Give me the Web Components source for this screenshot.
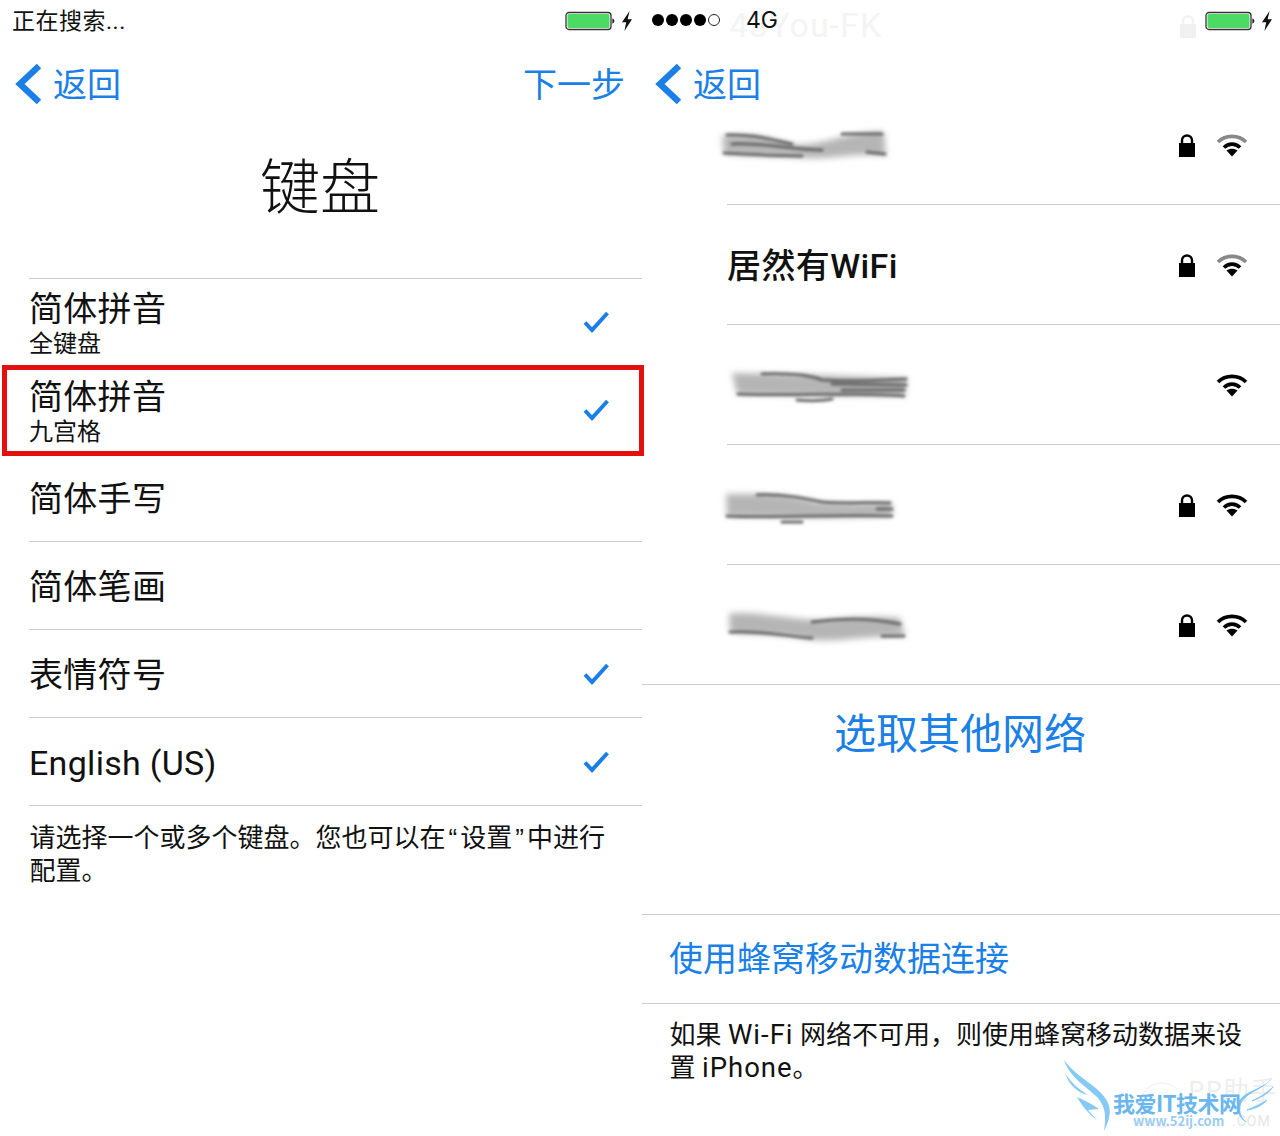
<!DOCTYPE html>
<html lang="zh-CN"><head><meta charset="utf-8"><style>
html,body{margin:0;background:#fff}
body{font-family:Roboto,"Noto Sans CJK SC",sans-serif;color:#111}
</style></head><body>
<x-page>
  <x-phone>
    <x-status mode="search"></x-status>
    <x-nav next="下一步"></x-nav>
    <x-title>键盘</x-title>
    <x-kb-list>
      <x-kb-row first sub="全键盘" check>简体拼音</x-kb-row>
      <x-kb-row sub="九宫格" check>简体拼音</x-kb-row>
      <x-kb-row>简体手写</x-kb-row>
      <x-kb-row>简体笔画</x-kb-row>
      <x-kb-row check>表情符号</x-kb-row>
      <x-kb-row check>English (US)</x-kb-row>
    </x-kb-list>
    <x-note pad="16">请选择一个或多个键盘。您也可以在<x-q>“</x-q>设置<x-q>”</x-q>中进行配置。</x-note>
    <x-redbox></x-redbox>
  </x-phone>
  <x-phone>
    <x-status mode="cell"></x-status>
    <x-nav></x-nav>
    <x-wifi-list>
      <x-wifi-row blur="1" dim></x-wifi-row>
      <x-wifi-row dim>居然有WiFi</x-wifi-row>
      <x-wifi-row blur="2" open></x-wifi-row>
      <x-wifi-row blur="3"></x-wifi-row>
      <x-wifi-row blur="4" full></x-wifi-row>
    </x-wifi-list>
    <x-other>选取其他网络</x-other>
    <x-cell-link>使用蜂窝移动数据连接</x-cell-link>
    <x-note pad="15">如果 <x-lat>Wi-Fi</x-lat> 网络不可用&#xFF0C;则使用蜂窝移动数据来设置 <x-lat>iPhone</x-lat>。</x-note>
    <x-watermark></x-watermark>
  </x-phone>
</x-page>
<script>
const BLUE='#1a7fe6';
const def=(name,html)=>{customElements.define(name,class extends HTMLElement{
  constructor(){super();this.attachShadow({mode:'open'}).innerHTML=typeof html==='function'?html(this):html;}
});};
const FONT='Roboto,"Noto Sans CJK SC",sans-serif';
const CJK='"Noto Sans CJK SC",sans-serif';
const battery=`<svg style="display:block" width="50" height="20" viewBox="0 0 50 20"><rect x="1" y="1.500" width="45" height="17" rx="3" fill="#fff" stroke="#333" stroke-width="1.300"/><rect x="2.500" y="3" width="42" height="14" rx="1.500" fill="#4cd964"/><path d="M47.400 7.500c1.300.3 2 1.300 2 2.500s-.7 2.200-2 2.500z" fill="#222"/></svg>`;
const bolt=`<svg style="display:block" width="12" height="20" viewBox="0 0 12 20"><path d="M8.600 0 1 11.200h4.200L3.400 20 11 8.200H6.600z" fill="#111"/></svg>`;
const lock=(c='#000')=>`<svg style="display:block" width="18" height="24" viewBox="0 0 18 24"><path d="M4 11V7.500a5 5 0 0 1 10 0V11" fill="none" stroke="${c}" stroke-width="2.400"/><rect x="1" y="10" width="16" height="14" fill="${c}"/></svg>`;
const wifi=(outer='#000')=>`<svg style="display:block" width="32" height="24" viewBox="0 0 32 24"><path d="M2 9C9.500 1.500 22.500 1.500 30 9" fill="none" stroke="${outer}" stroke-width="3.600"/><path d="M8 14.500C12.500 10 19.500 10 24 14.500" fill="none" stroke="#000" stroke-width="3.600"/><path d="M10.500 17.500 16 23.500 21.500 17.500C18 15 14 15 10.500 17.500z" fill="#000"/></svg>`;
const check=`<svg style="display:block" width="28" height="24" viewBox="0 0 28 24"><path d="M3 12.500 10 20 25.500 3" fill="none" stroke="${BLUE}" stroke-width="4"/></svg>`;

def('x-page',`<style>:host{display:grid;grid-template-columns:640px 640px;width:1280px;height:1136px;overflow:hidden;background:#fff}</style><slot></slot>`);
def('x-phone',`<style>:host{display:flex;flex-direction:column;position:relative;height:1136px;min-width:0}</style><slot></slot>`);
def('x-q',`<style>:host{display:inline;font-family:"Liberation Sans",sans-serif;padding:0 3px}</style><slot></slot>`);
def('x-lat',`<style>:host{display:inline;font-size:27.500px;letter-spacing:1px;line-height:1}</style><slot></slot>`);

def('x-status',el=>{
  const search=el.getAttribute('mode')==='search';
  return `<style>
  :host{display:flex;align-items:center;height:40px;padding:0 7px 0 12px;font-family:${FONT};color:#111;position:relative}
  .t{font-size:23px;line-height:42px;letter-spacing:.5px;padding-top:4px}
  .dots{display:flex;gap:2px;margin-right:26px}
  .dots i{width:12px;height:12px;border-radius:50%;background:#000;box-sizing:border-box}
  .dots i.o{background:#fff;border:1.200px solid #222}
  .g{font-family:Inter,Roboto,sans-serif;font-size:23px;line-height:42px;position:relative}
  .sp{flex:1}
  .b{display:flex;gap:6px;align-items:center;position:relative;margin-top:2px}
  .ghost{position:absolute;left:89px;top:4px;font:34px/42px Roboto,sans-serif;color:#f4f4f4;letter-spacing:1px}
  .gl{position:absolute;left:539px;top:14px;opacity:.05}
  </style>${search?`<span class="t">正在搜索...</span>`:`<span class="ghost">43You-FK</span><span class="gl">${lock()}</span><span class="dots"><i></i><i></i><i></i><i></i><i class="o"></i></span><span class="g">4G</span>`}<span class="sp"></span><span class="b">${battery}${bolt}</span>`;
});

def('x-nav',el=>{
  const n=el.getAttribute('next');
  return `<style>
  :host{display:flex;align-items:center;height:84px;padding:0 15px 0 15px;font-family:${CJK};font-size:34px;color:${BLUE}}
  svg{display:block;margin:4px 11px 0 0}
  .sp{flex:1}
  </style><svg width="27" height="42" viewBox="0 0 27 42"><path d="M24 3 5 21 24 39" fill="none" stroke="${BLUE}" stroke-width="6.500"/></svg><span>返回</span><span class="sp"></span>${n?`<span>${n}</span>`:''}`;
});

def('x-title',`<style>:host{display:flex;align-items:center;justify-content:center;height:154px;box-sizing:border-box;font-family:${CJK};font-size:60px;font-weight:300;color:#111;padding-bottom:38px}</style><slot></slot>`);

def('x-kb-list',`<style>:host{display:block;margin:0 -2px 0 29px;border-top:1px solid #ccc}</style><slot></slot>`);
def('x-kb-row',el=>{
  const s=el.getAttribute('sub');const c=el.hasAttribute('check');
  return `<style>
  :host{display:flex;align-items:center;height:88px;box-sizing:border-box;border-bottom:1px solid #ccc;font-family:${FONT};color:#111}
  :host([first]){margin-top:-1px}
  :host(:not([sub])) .tx{padding-top:2px}
  :host([sub]) .tx{padding-top:5px}
  .tx{flex:1;min-width:0}
  .m{font-size:34px;line-height:40px;letter-spacing:.3px}
  .s{font-size:24px;line-height:30px}
  .c{margin-right:32px;display:block;height:24px}
  </style><div class="tx"><div class="m"><slot></slot></div>${s?`<div class="s">${s}</div>`:''}</div>${c?`<span class="c">${check}</span>`:''}`;
});

def('x-note',el=>{
  const p=el.getAttribute('pad')||'12';
  return `<style>:host{display:block;padding:${p}px 30px 0 29.500px;font-family:${FONT};font-size:26px;line-height:32.500px;color:#111}</style><slot></slot>`;
});

def('x-redbox',`<style>:host{position:absolute;left:2px;top:365px;width:642px;height:91px;box-sizing:border-box;border:5px solid #e60f0f;z-index:3;pointer-events:none}</style>`);

def('x-wifi-list',`<style>:host{display:block;margin-top:-39px;margin-left:2px}</style><slot></slot>`);
const blurs={
 1:{band:'M80 10C110 6 130 12 150 18C175 22 210 4 242 6L244 30C215 26 190 34 165 32C130 30 110 30 82 28Z',lines:['M82 27C110 28 130 30 160 30','M85 9C110 8 130 14 150 18','M200 8 240 8','M225 26 243 28','M90 18C120 16 150 24 180 24']},
 2:{band:'M90 7C130 8 170 8 265 12L263 29C220 30 150 30 95 28Z',lines:['M96 28C150 30 220 26 262 30','M120 8C150 7 170 10 180 14C210 16 240 14 264 13','M190 18 264 19','M200 24 262 24','M155 34C165 35 180 35 190 33']},
 3:{band:'M84 8C120 8 150 8 175 16C200 18 225 18 250 17L250 30C200 32 130 32 85 30Z',lines:['M85 30C130 32 200 28 250 30','M115 9C140 8 160 12 180 16C205 18 225 16 248 17','M235 23 250 23','M140 36 160 36']},
 4:{band:'M87 8C110 4 150 14 180 14C210 10 240 10 258 12L263 30C220 30 200 36 170 34C130 26 110 30 88 26Z',lines:['M88 26C120 24 140 30 170 32','M170 16C200 12 230 12 258 18','M240 30 262 30']}
};
def('x-wifi-row',el=>{
  const b=el.getAttribute('blur');const dim=el.hasAttribute('dim');const open=el.hasAttribute('open');
  let blur='';
  if(b){const d=blurs[b];blur=`<svg class="bl" width="300" height="44" viewBox="0 0 300 44"><defs><filter id="f" x="-10%" y="-40%" width="120%" height="180%"><feGaussianBlur stdDeviation="3"/></filter><filter id="g" x="-10%" y="-60%" width="120%" height="220%"><feGaussianBlur stdDeviation="1.800"/></filter></defs><path d="${d.band}" fill="#b5b5b5" filter="url(#f)"/><g filter="url(#g)" fill="none" stroke="#666" stroke-width="3" stroke-linecap="round">${d.lines.map(p=>`<path d="${p}"/>`).join('')}</g></svg>`;}
  return `<style>
  :host{display:flex;align-items:center;height:120px;box-sizing:border-box;position:relative;font-family:${FONT};font-size:34px;font-weight:500;letter-spacing:.4px;color:#111;margin-left:85px;border-bottom:1px solid #ccc}
  :host([full]){margin-left:0;padding-left:85px}
  .n{flex:1;min-width:0;padding-bottom:3px}
  .bl{position:absolute;left:-85px;top:41px;display:block}
  :host([full]) .bl{left:0}
  .l{display:block;height:24px;margin-right:20px}
  .w{display:block;height:24px;margin-right:32px}
  </style><div class="n"><slot></slot></div>${blur}${open?'':`<span class="l">${lock()}</span>`}<span class="w">${wifi(dim?'#888':'#000')}</span>`;
});

def('x-other',`<style>:host{display:flex;align-items:center;justify-content:center;height:96px;box-sizing:border-box;padding-bottom:6px;font-family:${CJK};font-size:42px;color:${BLUE};margin-bottom:133px}</style><slot></slot>`);
def('x-cell-link',`<style>:host{display:flex;align-items:center;height:90px;box-sizing:border-box;margin-left:2px;padding:0 0 6px 27px;border-top:1px solid #ccc;border-bottom:1px solid #ccc;font-family:${CJK};font-size:34px;color:${BLUE}}</style><slot></slot>`);

def('x-watermark',`<style>
:host{position:absolute;left:400px;top:1040px;width:240px;height:96px;display:block;font-family:${CJK};pointer-events:none}
svg{position:absolute;left:0;top:0}
.a,.b,.c,.d{position:absolute;white-space:nowrap}
.a{left:73px;top:47px;font-size:22px;line-height:30px;font-weight:700;color:#6ab6ef;letter-spacing:-.5px}
.b{left:93px;top:73px;font-size:13px;line-height:16px;font-weight:700;color:#9ccdf2}
.c{left:148px;top:32px;font-size:26px;line-height:34px;color:#eeeeee;letter-spacing:1px}
.d{left:192px;top:73px;font:14px/16px Roboto,sans-serif;color:#e6e6e6;letter-spacing:1px}
</style>
<span class="c">PP助手</span><span class="d">.COM</span>
<svg width="240" height="96" viewBox="0 0 240 96"><circle cx="122" cy="65" r="22" fill="none" stroke="#eee" stroke-width="1"/>
<path d="M24 20C34 34 50 42 60 52C70 62 74 72 64 91C66 76 66 68 58 58C46 46 30 38 24 20z" fill="#85c9f5"/>
<path d="M25 33C31 43 40 50 48 55C38 53 29 45 25 33z" fill="#85c9f5"/>
<path d="M37 57C44 60 52 64 59 69L48 70 57 80C49 74 42 66 37 57z" fill="#85c9f5"/>
<path d="M232 38C224 50 206 52 201 64C199 72 201 78 208 83C200 80 196 72 198 63C204 50 222 50 232 38z" fill="#7cc4f4"/>
<path d="M233 47C228 54 220 58 212 61C220 57 227 53 233 47z" fill="#85c9f5" stroke="#85c9f5"/>
<path d="M227 60C222 66 214 69 207 70C214 67 221 64 227 60z" fill="#85c9f5" stroke="#85c9f5"/></svg>
<span class="a">我爱IT技术网</span><span class="b">www.52ij.com</span>`);
</script>
</body></html>
